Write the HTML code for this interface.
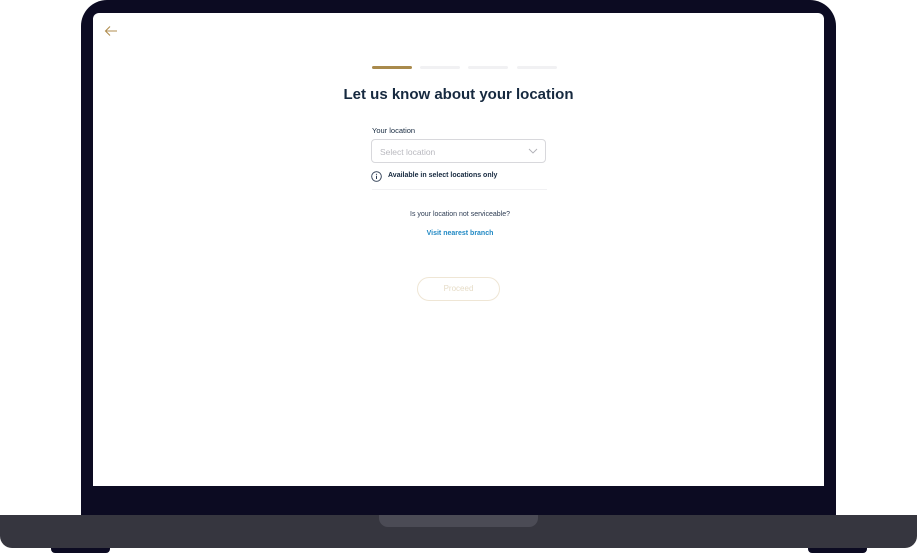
<!DOCTYPE html>
<html><head><style>
*{margin:0;padding:0;box-sizing:border-box}
body{width:917px;height:553px;background:#fff;position:relative;overflow:hidden;font-family:"Liberation Sans",sans-serif}
.frame{position:absolute;left:81px;top:0;width:755px;height:520px;background:#0c0b22;border-radius:26px 26px 0 0}
.screen{position:absolute;left:93px;top:13px;width:731px;height:473px;background:#fff;border-radius:6px 6px 0 0}
.base{position:absolute;left:0;top:515px;width:917px;height:33px;background:#36363f;border-radius:0 0 12px 12px}
.notch{position:absolute;left:379px;top:515px;width:159px;height:12px;background:#4b4b55;border-radius:0 0 9px 9px}
.foot{position:absolute;top:548px;width:59px;height:5px;background:#0c0b22;border-radius:0 0 4px 4px}
.abs{position:absolute}
</style></head><body>
<div class="frame"></div>
<div class="screen"></div>
<div class="base"></div>
<div class="notch"></div>
<div class="foot" style="left:51px"></div>
<div class="foot" style="left:808px"></div>

<svg class="abs" style="left:104px;top:25px" width="14" height="12" viewBox="0 0 14 12"><path d="M13 6H1.5M6 1.5L1.5 6L6 10.5" fill="none" stroke="#b08d4f" stroke-width="1.1"/></svg>

<div class="abs" style="left:372px;top:66px;width:40px;height:3px;background:#a98a4c;border-radius:2px"></div>
<div class="abs" style="left:420px;top:66px;width:40px;height:3px;background:#f1f1f3;border-radius:2px"></div>
<div class="abs" style="left:468px;top:66px;width:40px;height:3px;background:#f1f1f3;border-radius:2px"></div>
<div class="abs" style="left:517px;top:66px;width:40px;height:3px;background:#f1f1f3;border-radius:2px"></div>

<div class="abs" style="left:300px;top:86px;width:317px;text-align:center;font-size:15px;font-weight:bold;color:#16293f">Let us know about your location</div>

<div class="abs" style="left:372px;top:126px;font-size:7.5px;color:#16293f">Your location</div>
<div class="abs" style="left:371px;top:139px;width:175px;height:24px;border:1px solid #d8d8dc;border-radius:4px"></div>
<div class="abs" style="left:380px;top:147px;font-size:8.5px;color:#b9b9bf">Select location</div>
<svg class="abs" style="left:528px;top:148px" width="10" height="6" viewBox="0 0 10 6"><path d="M1 1L5 5L9 1" fill="none" stroke="#b0b0b6" stroke-width="0.9"/></svg>

<svg class="abs" style="left:371px;top:171px" width="11" height="11" viewBox="0 0 11 11"><circle cx="5.5" cy="5.5" r="4.8" fill="none" stroke="#2c3b52" stroke-width="0.9"/><path d="M5.5 4.8V8" stroke="#2c3b52" stroke-width="1"/><circle cx="5.5" cy="3.3" r="0.6" fill="#2c3b52"/></svg>
<div class="abs" style="left:388px;top:172px;font-size:7px;font-weight:bold;color:#16293f">Available in select locations only</div>
<div class="abs" style="left:372px;top:189px;width:175px;height:1px;background:#f1f1f3"></div>

<div class="abs" style="left:360px;top:211px;width:200px;text-align:center;font-size:7px;color:#2c3b52">Is your location not serviceable?</div>
<div class="abs" style="left:360px;top:230px;width:200px;text-align:center;font-size:7px;font-weight:bold;color:#2189c4">Visit nearest branch</div>

<div class="abs" style="left:417px;top:277px;width:83px;height:24px;border:1px solid #efe6d5;border-radius:12px;text-align:center;line-height:22px;font-size:8px;color:#e6dcc7">Proceed</div>
</body></html>
